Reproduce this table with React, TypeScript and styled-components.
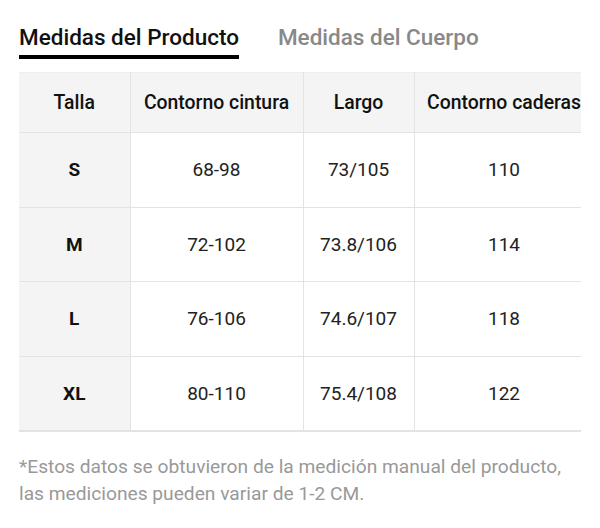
import React from "react";
import styled, { createGlobalStyle } from "styled-components";

const GlobalStyle = createGlobalStyle`
  html, body {
    margin: 0;
    padding: 0;
    background: #fff;
    font-family: Roboto, "Noto Sans", sans-serif;
  }
`;

const Page = styled.div`
  width: 600px;
  height: 528px;
  overflow: hidden;
  padding: 0 19px;
  box-sizing: border-box;
`;

const Tabs = styled.div`
  display: flex;
  gap: 39px;
  padding-top: 20px;
  margin-bottom: 13px;
`;

const Tab = styled.div<{ $active?: boolean }>`
  font-size: 22.5px;
  font-weight: 500;
  line-height: 32px;
  color: ${(p) => (p.$active ? "#111" : "#888")};
  border-bottom: 4px solid ${(p) => (p.$active ? "#000" : "transparent")};
  height: 39px;
  box-sizing: border-box;
  padding-top: 1px;
`;

const TableWrap = styled.div`
  width: 562px;
  overflow: hidden;
  border-bottom: 1px solid #e3e3e3;
`;

const Table = styled.table`
  border-collapse: collapse;
  table-layout: fixed;
  width: 575px;
`;

const Th = styled.th`
  height: 59px;
  background: #f4f4f4;
  font-size: 19.4px;
  font-weight: 500;
  color: #111;
  border: 1px solid #e3e3e3;
  border-top-color: #eee;
  border-left: none;
  white-space: nowrap;
  text-align: center;
  padding: 0;
`;

const Td = styled.td<{ $head?: boolean }>`
  height: 73.5px;
  font-size: 19px;
  text-align: center;
  padding: 0;
  border: 1px solid #e3e3e3;
  border-left: none;
  color: ${(p) => (p.$head ? "#111" : "#222")};
  font-weight: ${(p) => (p.$head ? 700 : 400)};
  background: ${(p) => (p.$head ? "#f4f4f4" : "#fff")};
`;

const Note = styled.p`
  margin: 21px 0 0;
  font-size: 19.2px;
  line-height: 27px;
  color: #999;
  white-space: nowrap;
`;

const Rule = styled.div`
  margin-top: 21px;
  border-top: 1px solid #e3e3e3;
`;

const rows = [
  ["S", "68-98", "73/105", "110"],
  ["M", "72-102", "73.8/106", "114"],
  ["L", "76-106", "74.6/107", "118"],
  ["XL", "80-110", "75.4/108", "122"],
];

export default function App() {
  return (
    <Page>
      <GlobalStyle />
      <Tabs>
        <Tab $active>Medidas del Producto</Tab>
        <Tab>Medidas del Cuerpo</Tab>
      </Tabs>
      <TableWrap>
        <Table>
          <colgroup>
            <col style={{ width: 111 }} />
            <col style={{ width: 173 }} />
            <col style={{ width: 111 }} />
            <col style={{ width: 180 }} />
          </colgroup>
          <thead>
            <tr>
              <Th>Talla</Th>
              <Th>Contorno cintura</Th>
              <Th>Largo</Th>
              <Th>Contorno caderas</Th>
            </tr>
          </thead>
          <tbody>
            {rows.map((r) => (
              <tr key={r[0]}>
                <Td $head>{r[0]}</Td>
                <Td>{r[1]}</Td>
                <Td>{r[2]}</Td>
                <Td>{r[3]}</Td>
              </tr>
            ))}
          </tbody>
        </Table>
      </TableWrap>
      <Note>
        *Estos datos se obtuvieron de la medición manual del producto,
        <br />
        las mediciones pueden variar de 1-2 CM.
      </Note>
      <Rule />
    </Page>
  );
}
